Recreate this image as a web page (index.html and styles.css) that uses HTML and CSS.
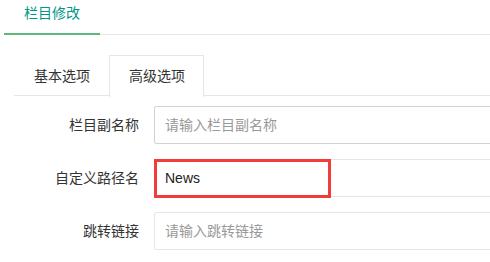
FILE: index.html
```html
<!DOCTYPE html>
<html lang="zh-CN">
<head>
  <meta charset="UTF-8">
  <meta name="viewport" content="width=device-width, initial-scale=1.0">
  <title>栏目修改</title>
  <link rel="stylesheet" href="styles.css">
</head>
<body>
  <ul class="main-tab">
    <li class="this">栏目修改</li>
  </ul>

  <div class="tab-wrap">
    <ul class="tab-title">
      <li>基本选项</li>
      <li class="this">高级选项</li>
    </ul>

    <form class="tab-form">
      <div class="form-item">
        <label class="form-label">栏目副名称</label>
        <div class="input-block">
          <input type="text" class="input input-hover" placeholder="请输入栏目副名称">
        </div>
      </div>

      <div class="form-item">
        <label class="form-label">自定义路径名</label>
        <div class="input-block">
          <input type="text" class="input" value="News">
          <!-- 标注框 -->
          <span class="mark-box"></span>
        </div>
      </div>

      <div class="form-item">
        <label class="form-label">跳转链接</label>
        <div class="input-block">
          <input type="text" class="input" placeholder="请输入跳转链接">
        </div>
      </div>
    </form>
  </div>
</body>
</html>
```

FILE: styles.css
```css
body {
  margin: 0;
  padding: 0;
  background-color: #fff;
  font-family: "Liberation Sans", "Noto Sans CJK SC", sans-serif;
  font-size: 14px;
  color: #333;
  overflow: hidden;
}

ul {
  margin: 0;
  padding: 0;
  list-style: none;
}

.main-tab {
  display: flex;
  margin-left: 4px;
  border-bottom: 1px solid #e6e6e6;
}

.main-tab li {
  padding: 0 20px 0 20px;
  width: 56px;
  height: 33px;
  line-height: 27px;
  color: #009688;
  border-bottom: 2px solid #5fb878;
  margin-bottom: -1px;
}

.tab-wrap {
  margin: 20px -20px 0 14px;
}

.tab-title {
  display: flex;
  height: 40px;
  border-bottom: 1px solid #e6e6e6;
}

.tab-title li {
  padding: 0 18px 0 19px;
  height: 40px;
  line-height: 40px;
  border: 1px solid transparent;
  border-bottom: none;
  white-space: nowrap;
  color: #333;
}

.tab-title li.this {
  border-color: #e6e6e6;
  background: #fff;
  height: 41px;
}

.tab-form {
  padding-top: 10px;
}

.form-item {
  display: flex;
  margin-bottom: 15px;
}

.form-label {
  width: 110px;
  padding: 9px 15px;
  line-height: 20px;
  text-align: right;
  white-space: nowrap;
  color: #333;
}

.input-block {
  position: relative;
  flex: 1;
}

.input {
  display: block;
  box-sizing: border-box;
  width: 100%;
  height: 38px;
  padding: 0 10px;
  border: 1px solid #e6e6e6;
  border-radius: 2px;
  font-family: "Liberation Sans", "Noto Sans CJK SC", sans-serif;
  font-size: 14px;
  color: #222;
  background: #fff;
  outline: none;
}

.input-hover {
  border-color: #d2d2d2;
}

.input::placeholder {
  color: #999;
}

.mark-box {
  position: absolute;
  left: 0;
  top: 0;
  width: 177px;
  height: 39px;
  box-sizing: border-box;
  border: 3px solid #f23b3b;
  pointer-events: none;
}
```
